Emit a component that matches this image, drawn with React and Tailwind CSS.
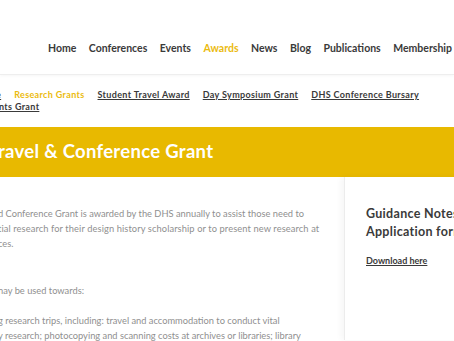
import React from "react";

const navItems = ["Home", "Conferences", "Events", "Awards", "News", "Blog", "Publications", "Membership"];

const App = () => {
  return (
    <div
      className="w-[454px] h-[341px] overflow-hidden bg-white relative"
      style={{ fontFamily: "Lato, 'Open Sans', sans-serif" }}
    >
      {/* Top nav */}
      <div className="h-[75px] border-b border-[#eeeeee] shadow-[0_1px_3px_rgba(0,0,0,0.04)] flex items-end justify-end pb-[17px] pr-[2px]">
        <ul className="flex gap-[12.5px] text-[10.5px] font-bold text-[#3a3a3a] whitespace-nowrap">
          {navItems.map((item) => (
            <li key={item} className={item === "Awards" ? "text-[#ebbb10]" : ""}>
              {item}
            </li>
          ))}
        </ul>
      </div>

      {/* Sub nav */}
      <div className="pt-[14px] text-[9px] font-bold tracking-[0.35px] leading-[12px] text-[#3a3a3a] whitespace-nowrap">
        <div className="flex gap-[13px] -ml-[4px]">
          <span className="underline">e</span>
          <span className="text-[#ebbb10]">Research Grants</span>
          <span className="underline">Student Travel Award</span>
          <span className="underline">Day Symposium Grant</span>
          <span className="underline">DHS Conference Bursary</span>
        </div>
        <div className="-ml-[1px]">
          <span className="underline">nts Grant</span>
        </div>
      </div>

      {/* Banner */}
      <div className="mt-[14px] h-[50px] bg-[#e8b900] flex items-center -ml-[2px]">
        <h1 className="text-[18.5px] font-bold text-white tracking-[0.3px]">ravel &amp; Conference Grant</h1>
      </div>

      {/* Content */}
      <div className="flex">
        <div className="w-[344px] shrink-0 pt-[29px] text-[9.3px] leading-[15px] text-[#8f8f8f] whitespace-nowrap overflow-hidden">
          <p className="-ml-[2px]">d Conference Grant is awarded by the DHS annually to assist those need to</p>
          <p className="-ml-[2px] tracking-[0.1px]">tial research for their design history scholarship or to present new research at</p>
          <p className="-ml-[2px]">ces.</p>
          <p className="mt-[32px] -ml-[2px]">nay be used towards:</p>
          <p className="mt-[15px] -ml-[2px]">g research trips, including: travel and accommodation to conduct vital</p>
          <p className="-ml-[2px]">y research; photocopying and scanning costs at archives or libraries; library</p>
        </div>
        <div className="flex-1 border-l border-[#ececec] shadow-[-3px_0_6px_rgba(0,0,0,0.04)] h-[163px] pl-[21px] pt-[28px] whitespace-nowrap">
          <h2 className="text-[12.5px] font-bold leading-[18px] text-[#3a3a3a] tracking-[0.3px]">
            Guidance Notes
            <br />
            Application form
          </h2>
          <a className="block mt-[13px] text-[9px] font-bold underline text-[#3a3a3a]">Download here</a>
        </div>
      </div>
    </div>
  );
};

export default App;
